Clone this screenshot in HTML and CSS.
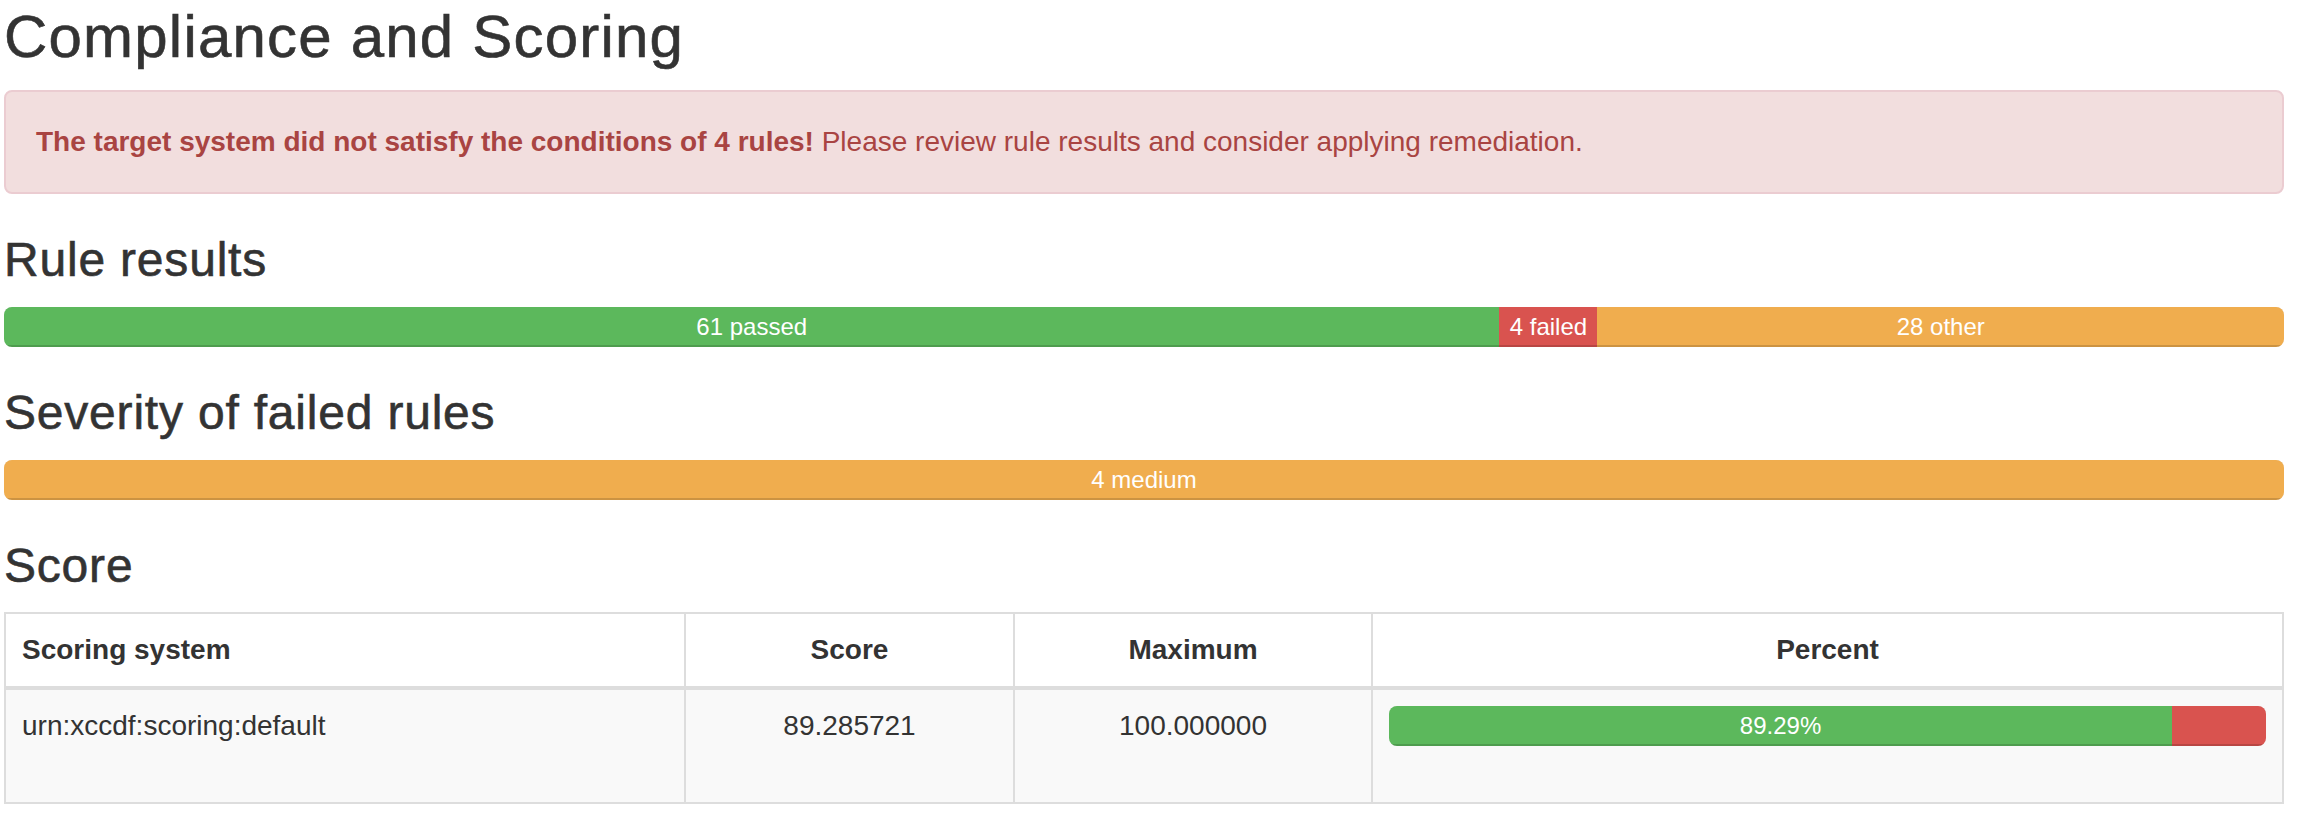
FILE: index.html
```html
<!DOCTYPE html>
<html lang="en">
<head>
  <meta charset="UTF-8">
  <title>Compliance and Scoring</title>
  <link rel="stylesheet" href="styles.css">
</head>
<body>

  <div class="report">
    <h2>Compliance and Scoring</h2>

    <div class="alert alert-danger">
      <strong>The target system did not satisfy the conditions of 4 rules!</strong> Please review rule results and consider applying remediation.
    </div>

    <h3>Rule results</h3>
    <div class="progress">
      <div class="progress-bar bar-success" style="width: 65.59%">61 passed</div>
      <div class="progress-bar bar-danger" style="width: 4.30%">4 failed</div>
      <div class="progress-bar bar-warning" style="width: 30.11%">28 other</div>
    </div>

    <h3>Severity of failed rules</h3>
    <div class="progress">
      <div class="progress-bar bar-warning" style="width: 100%">4 medium</div>
    </div>

    <h3>Score</h3>
    <table class="table">
      <thead>
        <tr>
          <th class="col-system">Scoring system</th>
          <th class="col-score text-center">Score</th>
          <th class="col-max text-center">Maximum</th>
          <th class="col-percent text-center">Percent</th>
        </tr>
      </thead>
      <tbody>
        <tr>
          <td>urn:xccdf:scoring:default</td>
          <td class="text-center">89.285721</td>
          <td class="text-center">100.000000</td>
          <td>
            <div class="progress">
              <div class="progress-bar bar-success" style="width: 89.29%">89.29%</div>
              <div class="progress-bar bar-danger" style="width: 10.71%"></div>
            </div>
          </td>
        </tr>
      </tbody>
    </table>
  </div>

</body>
</html>
```

FILE: styles.css
```css
body {
  margin: 0;
  background: #fff;
  color: #333;
  font-family: "Liberation Sans", Arial, Helvetica, sans-serif;
  font-size: 28px;
  line-height: 1.42857;
}

.report {
  padding: 4px 14px 0 4px;
}

h2, h3 {
  font-weight: 500;
  line-height: 1.1;
  color: #333;
  margin: 40px 0 20px;
  -webkit-text-stroke: 0.6px #333;
}

h2 {
  font-size: 60px;
  margin-top: 0;
  letter-spacing: 1.2px;
}

h3 {
  font-size: 48px;
  letter-spacing: 0.8px;
}

.alert {
  padding: 30px;
  margin-bottom: 40px;
  border: 2px solid transparent;
  border-radius: 8px;
}

.alert-danger {
  background: #f2dede;
  border-color: #ebccd1;
  color: #a94442;
}

.progress {
  display: flex;
  height: 40px;
  margin-bottom: 40px;
  overflow: hidden;
  background: #f5f5f5;
  border-radius: 8px;
  box-shadow: inset 0 2px 4px rgba(0, 0, 0, .1);
}

.progress-bar {
  height: 100%;
  font-size: 24px;
  line-height: 40px;
  color: #fff;
  text-align: center;
  white-space: nowrap;
  box-shadow: inset 0 -2px 0 rgba(0, 0, 0, .15);
}

.bar-success { background: #5cb85c; }
.bar-danger  { background: #d9534f; }
.bar-warning { background: #f0ad4e; }

.table {
  width: 100%;
  table-layout: fixed;
  border-collapse: collapse;
  border: 2px solid #ddd;
  margin-bottom: 40px;
}

.table th,
.table td {
  padding: 16px;
  border: 2px solid #ddd;
  line-height: 1.42857;
  vertical-align: top;
  text-align: left;
}

.table th {
  font-weight: bold;
  vertical-align: bottom;
  border-bottom-width: 4px;
}

.table tbody tr {
  background: #f9f9f9;
}

.table td .progress {
  margin-bottom: 40px;
}

.table .text-center {
  text-align: center;
}

.col-system  { width: 646px; }
.col-score   { width: 295px; }
.col-max     { width: 324px; }
```
